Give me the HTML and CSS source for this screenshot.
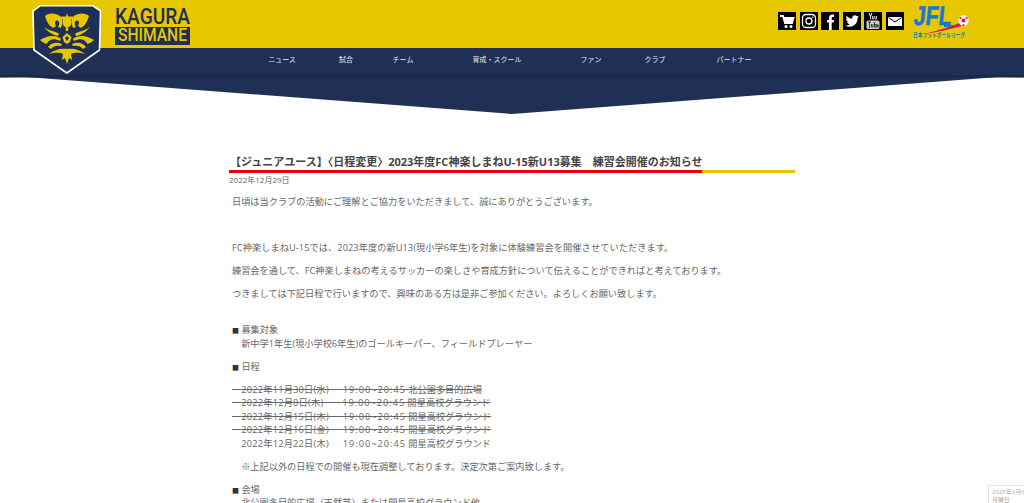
FILE: index.html
```html
<!DOCTYPE html>
<html lang="ja">
<head>
<meta charset="utf-8">
<title>FC神楽しまね</title>
<link rel="stylesheet" href="styles.css">
</head>
<body>
<div class="page">
  <header class="site-header">
    <div class="topbar">
      <a class="brand">
        <svg class="crest" viewBox="32 5 70 70" width="70" height="70">
          <path d="M33 11L40 5.800H93L100.500 11L99.500 50L66.800 73L34 50Z" fill="#1f2f55" stroke="#fff" stroke-width="1.600" stroke-linejoin="round"/>
          <g fill="#e6c700">
            <g id="half">
              <path d="M45 16C48 12.500 56 12.500 60 16C63.500 19 63.500 24 60.500 28L58 27C60 24 59.500 21 57 20.500C55 20.500 54.500 23 56 26L53 28C49 26 46.500 21 45 16Z"/>
              <path d="M44 27C48 30 53 31 59 33.500L58 36C52 34.500 48 32 44 27Z"/>
              <path d="M40 40C46 36 54 34 61 38.500L60 41C54 38 49 39 46.500 44C44 43 42 42 40 40Z"/>
              <path d="M48 47C52 42 57 42 62 44L61 46C57 45 53 46 51 49Z"/>
              <path d="M49 54C54 50 60 48 67 49V64L65 58L62 60L63 54C59 52 54 53 49 54Z"/>
            </g>
            <use href="#half" transform="translate(134 0) scale(-1 1)"/>
            <path d="M67 13L68 16.500H73V19H71V24C71 26 69.500 27 68.200 27V31H65.800V27C64.500 27 63 26 63 24V19H61V16.500H66Z"/>
            <path fill-rule="evenodd" d="M67 33L71.500 37L70 42L67 44L64 42L62.500 37ZM67 36L65 38L67 41L69 38Z"/>
          </g>
        </svg>
        <svg class="wordmark" viewBox="0 0 75 38" width="75" height="38">
          <text class="wm-top" x="0" y="16" textLength="75" lengthAdjust="spacingAndGlyphs">KAGURA</text>
          <rect x="0" y="19" width="75" height="18" fill="#1f2f55"/>
          <text class="wm-bot" x="3" y="33" textLength="69" lengthAdjust="spacingAndGlyphs">SHIMANE</text>
        </svg>
      </a>
      <div class="social">
        <a class="ico"><svg viewBox="0 0 18 18"><path d="M2 4H5L7 11H14L15.500 6H6" fill="none" stroke="#fff" stroke-width="1.800"/><path d="M6 6H15.500L14 11H7Z" fill="#fff"/><circle cx="8" cy="14.500" r="1.500" fill="#fff"/><circle cx="13" cy="14.500" r="1.500" fill="#fff"/></svg></a>
        <a class="ico"><svg viewBox="0 0 18 18"><rect x="2.500" y="2.500" width="13" height="13" rx="3.500" fill="none" stroke="#fff" stroke-width="1.300"/><circle cx="9" cy="9" r="3" fill="none" stroke="#fff" stroke-width="1.300"/><circle cx="12.800" cy="5.200" r=".8" fill="#fff"/></svg></a>
        <a class="ico"><svg viewBox="0 0 18 18"><path d="M8 18V10.500H6V8H8V6C8 3.500 9.500 2.500 11.500 2.500H13V5H12C11 5 10.700 5.500 10.700 6.300V8H13L12.600 10.500H10.700V18Z" fill="#fff"/></svg></a>
        <a class="ico"><svg viewBox="0 0 18 18"><path d="M2 13.500C4 13.700 5.500 13.200 6.800 12.200C5.400 12 4.500 11.300 4 10C4.500 10.100 5 10.100 5.400 10C4 9.500 3.100 8.400 3.100 7C3.500 7.200 4 7.400 4.500 7.400C3.200 6.400 2.900 5 3.600 3.800C5.100 5.600 7 6.600 9.200 6.700C8.800 4.600 10.300 3.300 11.800 3.300C12.700 3.300 13.400 3.700 13.900 4.200C14.500 4.100 15.100 3.800 15.600 3.500C15.400 4.200 14.900 4.800 14.400 5.100C14.900 5 15.500 4.900 16 4.600C15.600 5.200 15.100 5.800 14.600 6.100C14.800 10.500 11.500 14.700 6.600 14.700C4.900 14.700 3.300 14.300 2 13.500Z" fill="#fff"/></svg></a>
        <a class="ico"><svg viewBox="0 0 18 18"><path d="M5 1L6.500 4.500L8 1M6.500 4.500V7.500" fill="none" stroke="#ccc" stroke-width="1.100"/><path d="M8.500 4V7H10V4M11 4V7H12.500V4" fill="none" stroke="#ccc" stroke-width=".9"/><rect x="2.500" y="8.500" width="13" height="8.500" rx="1.500" fill="#ccc"/><path d="M4 10H7M5.500 10V16M7.500 12V15H9V12M10.500 10V15.500M10.500 12.500H12.200V15H10.500M13 13.300H15M13 12V15H15" fill="none" stroke="#000" stroke-width=".7"/></svg></a>
        <a class="ico"><svg viewBox="0 0 18 18"><rect x="2" y="5" width="14" height="9" fill="#fff"/><path d="M2.500 5.500L9 10L15.500 5.500" fill="none" stroke="#000" stroke-width="1"/></svg></a>
        <a class="jfl">
          <svg viewBox="0 0 58 34" width="58" height="34">
            <g transform="skewX(-6)">
              <text class="jfl-word" x="3" y="20" textLength="38" lengthAdjust="spacingAndGlyphs">JFL</text>
            </g>
            <path d="M12 29C25 26 38 22 50 17L53 20C40 24 26 27 12 29Z" fill="#e60e3c"/>
            <path d="M32 20H44L38 22H32Z" fill="#1679d0"/>
            <circle cx="51.500" cy="15.500" r="5.200" fill="#fff"/>
            <circle cx="51.500" cy="15.500" r="1.900" fill="#e60e3c"/>
            <circle cx="48.500" cy="13" r="1.100" fill="#e60e3c"/>
            <circle cx="54.500" cy="13" r="1.100" fill="#e60e3c"/>
            <circle cx="51.500" cy="20" r="1" fill="#e60e3c"/>
            <text class="jfl-sub" x="1" y="32" textLength="52" lengthAdjust="spacingAndGlyphs">日本フットボールリーグ</text>
          </svg>
        </a>
      </div>
    </div>
    <nav class="navbar">
      <a class="nav-item w-64">ニュース</a>
      <a class="nav-item w-64">試合</a>
      <a class="nav-item w-50">チーム</a>
      <a class="nav-item w-138">育成・スクール</a>
      <a class="nav-item w-50">ファン</a>
      <a class="nav-item w-78">クラブ</a>
      <a class="nav-item w-80">パートナー</a>
    </nav>
    <svg class="chevron" viewBox="0 0 1024 39" width="1024" height="39">
      <path d="M0 0L22 1.700L0 3ZM1024 0L1002 1.700L1024 3Z" fill="#c9c9c9"/>
      <path d="M0 0H1024L512 39Z" fill="#1f2f55"/>
      <rect y="0" width="1024" height="2.500" fill="#1b274a"/>
    </svg>
  </header>
  <main class="article">
    <h1 class="title">【ジュニアユース】〈日程変更〉2023年度FC神楽しまねU-15新U13募集　練習会開催のお知らせ</h1>
    <div class="rule"><span class="rule-red"></span><span class="rule-yellow"></span></div>
    <time class="date">2022年12月29日</time>
    <div class="body">
      <p>日頃は当クラブの活動にご理解とご協力をいただきまして、誠にありがとうございます。</p>
      <p>&nbsp;</p>
      <p class="wide">FC神楽しまねU-15では、2023年度の新U13(現小学6年生)を対象に体験練習会を開催させていただきます。</p>
      <p>練習会を通して、FC神楽しまねの考えるサッカーの楽しさや育成方針について伝えることができればと考えております。</p>
      <p>つきましては下記日程で行いますので、興味のある方は是非ご参加ください。よろしくお願い致します。</p>
      <p>&nbsp;<br><span class="mark">■</span> 募集対象<br>　新中学1年生(現小学校6年生)のゴールキーパー、フィールドプレーヤー</p>
      <p><span class="mark">■</span> 日程</p>
      <p><s>　<span class="day">2022年11月30日(水)</span>　&nbsp; <span class="time">19:00~20:45</span> 北公園多目的広場</s><br>
      <s>　<span class="day">2022年12月8日(木)</span>　&nbsp;&nbsp;&nbsp; <span class="time">19:00~20:45</span> 開星高校グラウンド</s><br>
      <s>　<span class="day">2022年12月15日(木)</span>　&nbsp; <span class="time">19:00~20:45</span> 開星高校グラウンド</s><br>
      <s>　<span class="day">2022年12月16日(金)</span>　&nbsp; <span class="time">19:00~20:45</span> 開星高校グラウンド</s><br>
      　<span class="day">2022年12月22日(木)</span>　&nbsp; <span class="time">19:00~20:45</span> 開星高校グラウンド</p>
      <p>　※上記以外の日程での開催も現在調整しております。決定次第ご案内致します。</p>
      <p><span class="mark">■</span> 会場<br>　北公園多目的広場（天然芝）または開星高校グラウンド他</p>
    </div>
  </main>
  <aside class="stamp">2025年2月6<br>月曜日</aside>
</div>
</body>
</html>
```
FILE: styles.css
```css
* { box-sizing: border-box; }
html, body { margin: 0; padding: 0; background: #fff; }
body { font-family: "Open Sans", "Noto Sans CJK JP", sans-serif; color: #666; }
.page { position: relative; width: 1024px; height: 503px; overflow: hidden; }

.site-header { position: relative; }
.topbar { height: 48px; background: #e6c700; display: flex; justify-content: space-between; padding: 0 54px 0 32px; }
.brand { display: flex; align-items: flex-start; gap: 13px; }
.crest { flex: none; margin-top: 5px; position: relative; z-index: 2; }
.wordmark { flex: none; margin-top: 8px; }
.wm-top { font: 500 22px "Roboto", sans-serif; fill: #1f2f55; }
.wm-bot { font: 500 18px "Roboto", sans-serif; fill: #e6c700; }

.social { display: flex; gap: 3.6px; padding-top: 12px; align-items: flex-start; }
.ico { width: 18px; height: 18px; background: #000; display: block; flex: none; }
.ico svg { display: block; width: 18px; height: 18px; }
.jfl { display: block; flex: none; margin: -7px 0 0 4.400px; width: 58px; }
.jfl svg { display: block; }
.jfl-word { font: 700 27px "Liberation Sans", sans-serif; fill: #1679d0; stroke: #1679d0; stroke-width: .5px; }
.jfl-sub { font: 700 6px "Noto Sans CJK JP", sans-serif; fill: #1679d0; }

.navbar { height: 27px; background: #1f2f55; display: flex; padding-left: 250px; }
.nav-item { display: block; color: #e4e7ee; font-size: 7px; line-height: 24px; text-align: center; }
.w-64 { width: 64px; }
.w-50 { width: 50px; }
.w-138 { width: 138px; }
.w-78 { width: 78px; }
.w-80 { width: 80px; }
.chevron { display: block; }

.article { width: 566px; margin: 40px 0 0 229px; }
.title { margin: 0; padding-left: 1px; font-size: 11px; line-height: 16px; font-weight: 700; color: #444; white-space: nowrap; }
.rule { display: flex; height: 3px; }
.rule-red { width: 473px; background: #e60012; }
.rule-yellow { flex: 1; background: #e6c700; }
.date { display: block; font-size: 8px; line-height: 13px; color: #666; }
.body { margin-top: 8.500px; padding-left: 3px; font-size: 9.200px; line-height: 13.500px; }
.body p { margin: 0 0 9.500px; }
.body .wide { letter-spacing: .08px; }
.mark { font-size: 7px; line-height: 0; color: #333; }
.day { letter-spacing: .25px; }
.time { letter-spacing: 1px; }
.stamp { position: absolute; right: 0; bottom: 0; width: 36px; height: 18px; padding: 2px 0 0 3px; border: 1px solid #e4e4e4; border-right: 0; border-bottom: 0; background: #fff; font-size: 6px; line-height: 8px; color: #aaa; white-space: nowrap; overflow: hidden; }
```
